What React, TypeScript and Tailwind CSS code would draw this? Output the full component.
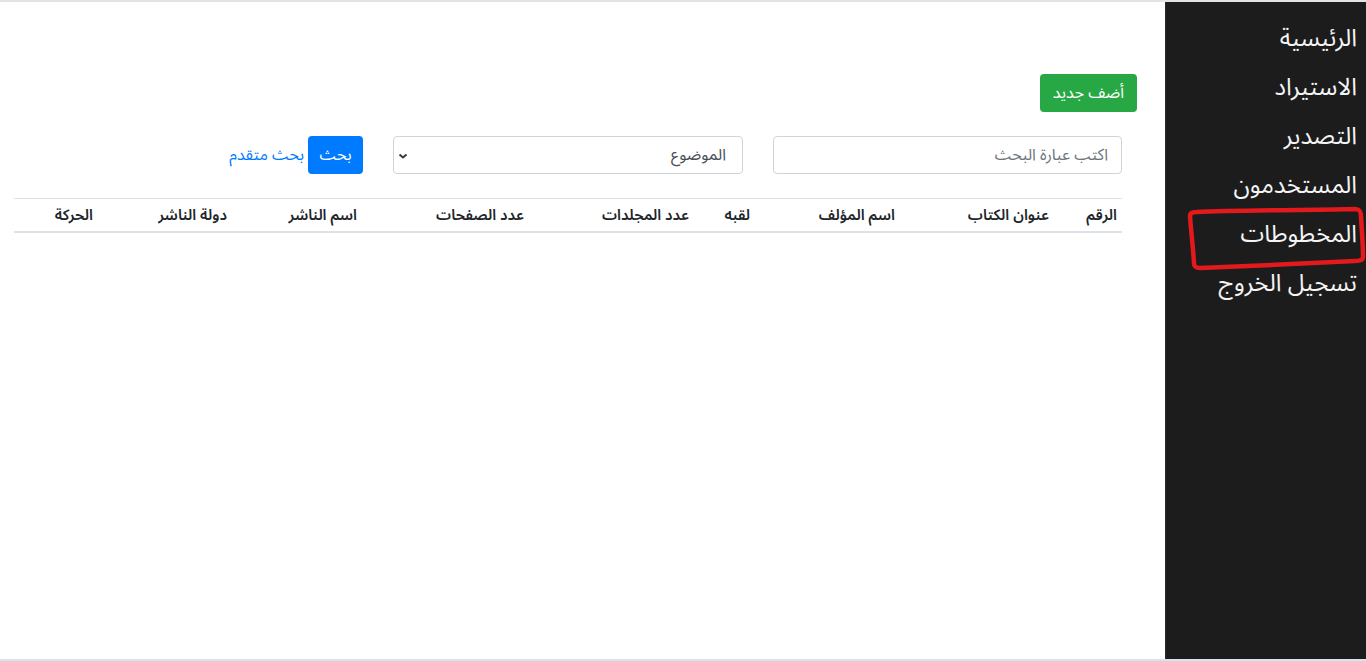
import React from "react";

const navItems = ["الرئيسية", "الاستيراد", "التصدير", "المستخدمون", "المخطوطات", "تسجيل الخروج"];

const columns = [
  { title: "الرقم", w: "w-[68px]" },
  { title: "عنوان الكتاب", w: "w-[154px]" },
  { title: "اسم المؤلف", w: "w-[145px]" },
  { title: "لقبه", w: "w-[61px]" },
  { title: "عدد المجلدات", w: "w-[165px]" },
  { title: "عدد الصفحات", w: "w-[167px]" },
  { title: "اسم الناشر", w: "w-[130px]" },
  { title: "دولة الناشر", w: "w-[134px]" },
  { title: "الحركة", w: "w-[84px]" },
];

export default function App() {
  return (
    <div
      dir="rtl"
      className="relative flex h-[661px] w-[1366px] overflow-hidden border-t-2 border-b-2 border-t-[#e3e3e3] border-b-[#d3e5f1] bg-white text-[#212529]"
      style={{ fontFamily: '"Segoe UI", "Noto Sans Arabic", "DejaVu Sans", sans-serif' }}
    >
      {/* SIDEBAR */}
      <aside className="w-[201px] shrink-0 bg-[#1c1c1c] border-l border-[#2a2a2a] pr-[9px] pt-[15px]">
        <ul className="flex flex-col">
          {navItems.map((item) => (
            <li key={item} className="h-[49px] leading-[44px] text-[24px] text-[#f4f4f4]">
              {item}
            </li>
          ))}
        </ul>
      </aside>

      {/* MAIN */}
      <main className="flex-1 pr-[28px] pl-[14px] pt-[72px]">
        <div className="flex">
          <button className="h-[38px] px-[13px] rounded bg-[#28a745] text-white text-[16px]">
            أضف جديد
          </button>
        </div>

        <div className="mr-[15px] mt-[24px] flex items-center">
          <input
            className="h-[38px] w-[349px] rounded border border-[#ced4da] px-[13px] text-[16px] placeholder-[#6c757d] outline-none"
            placeholder="اكتب عبارة البحث"
          />
          <div className="relative mr-[30px] h-[38px] w-[350px] rounded border border-[#ced4da] flex items-center pr-[16px] text-[16px] text-[#495057]">
            الموضوع
            <svg className="absolute left-[4px] top-[15px]" width="10" height="8" viewBox="0 0 10 8">
              <path d="M1.5 2.5 L5 5.5 L8.5 2.5" fill="none" stroke="#343a40" strokeWidth="2" />
            </svg>
          </div>
          <button className="mr-[30px] h-[38px] w-[55px] rounded bg-[#007bff] text-white text-[16px]">
            بحث
          </button>
          <a className="mr-[4px] text-[16px] text-[#007bff]">بحث متقدم</a>
        </div>

        <table className="mr-[15px] mt-[24px] w-[1108px] border-collapse table-fixed">
          <thead>
            <tr className="border-t border-[#dee2e6]">
              {columns.map((c) => (
                <th
                  key={c.title}
                  className={`${c.w} h-[33px] pr-[5px] text-right text-[15px] font-semibold border-b-2 border-[#dee2e6]`}
                >
                  {c.title}
                </th>
              ))}
            </tr>
          </thead>
          <tbody></tbody>
        </table>
      </main>

      {/* annotation */}
      <svg className="pointer-events-none absolute left-0 top-0" width="1366" height="661">
        <path
          d="M1196 210 C1240 208 1320 208 1355 207 C1360 207 1361 210 1361 215 C1362 230 1363 245 1363 255 C1363 258 1360 259 1355 259 C1320 261 1250 264 1200 266 C1195 266 1194 264 1194 261 C1193 245 1191 228 1190 214 C1190 211 1192 210 1196 210 Z"
          fill="none"
          stroke="#e3191c"
          strokeWidth="4.5"
        />
      </svg>
    </div>
  );
}
